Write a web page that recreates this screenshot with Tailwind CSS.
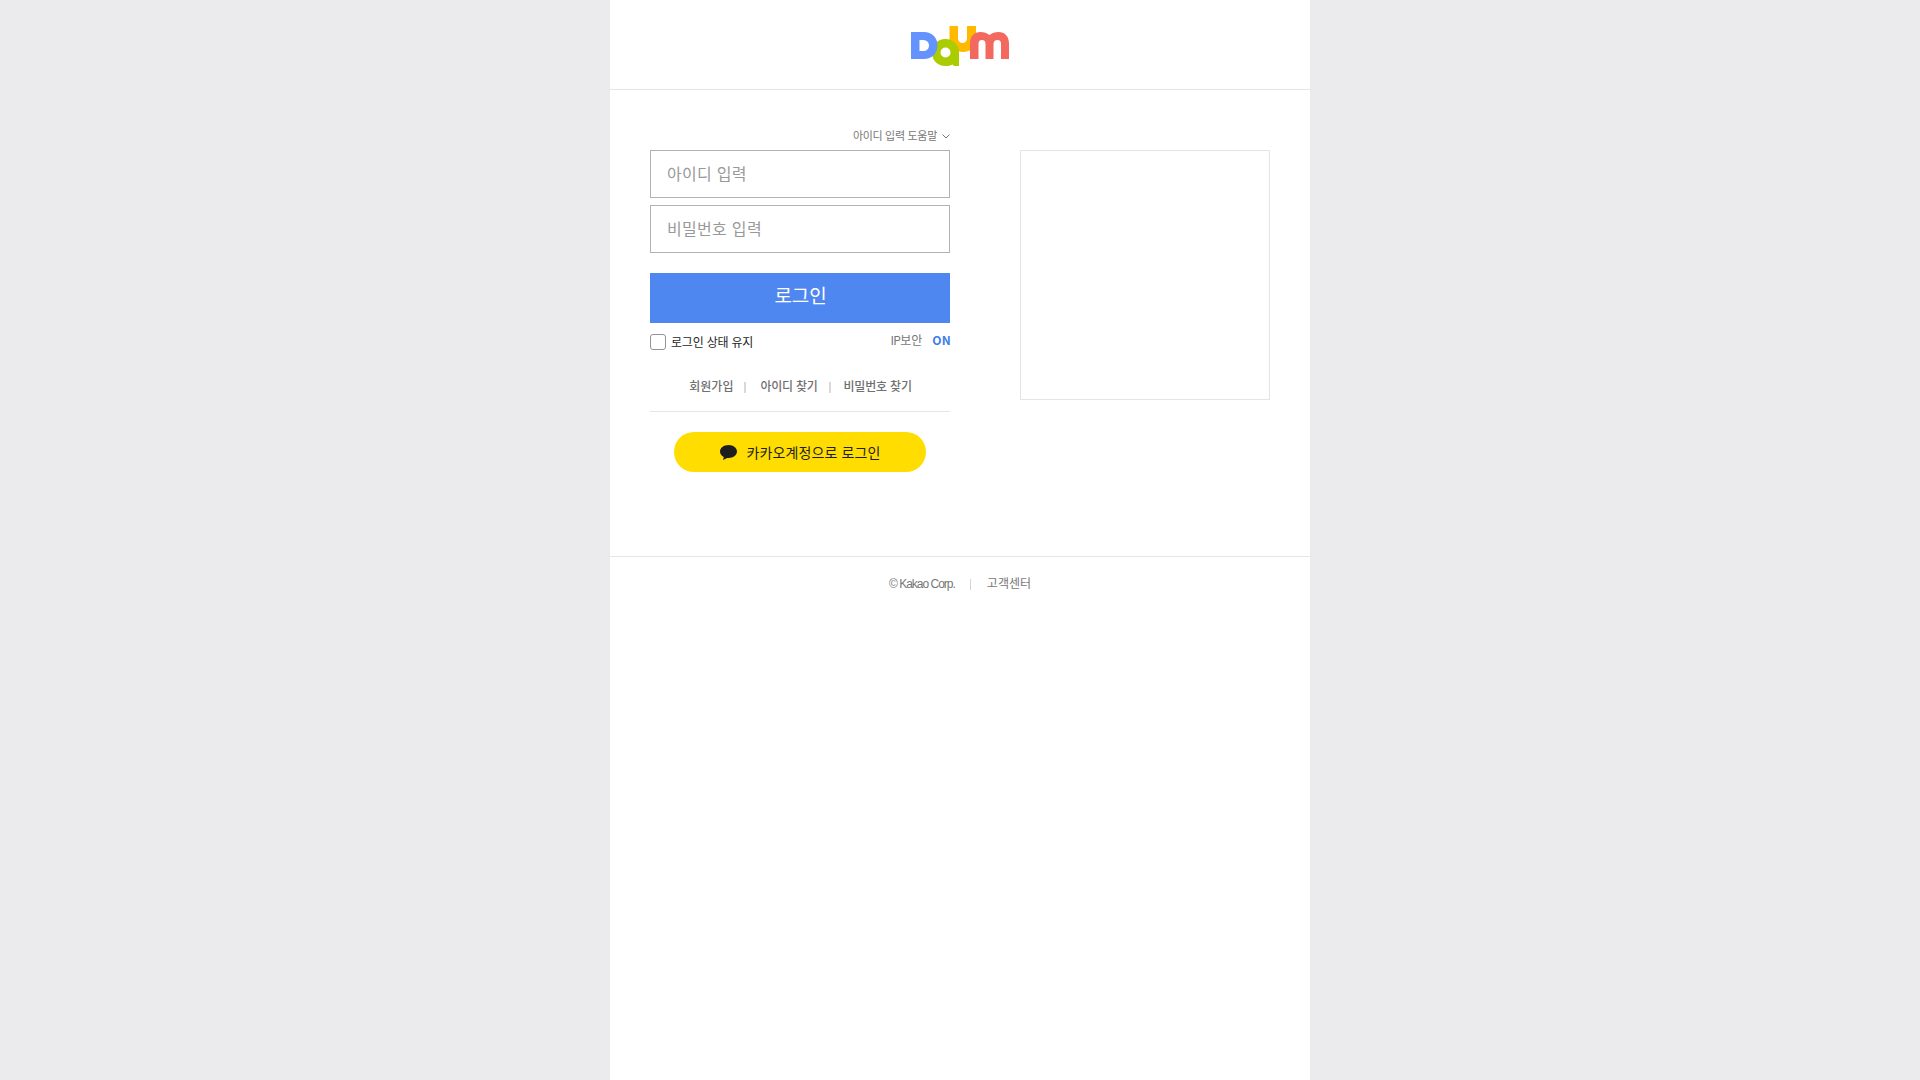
<!DOCTYPE html>
<html lang="ko">
<head>
<meta charset="utf-8">
<title>Daum 로그인</title>
<script src="https://cdn.jsdelivr.net/npm/@tailwindcss/browser@4"></script>
</head>
<body class="bg-[#ebebed] font-['Noto_Sans_CJK_KR',sans-serif] text-xs whitespace-nowrap">
<div class="mx-auto min-h-screen w-[700px] bg-white">
  <header class="flex h-[90px] justify-center border-b border-[#e5e5e5] pt-[26px]">
    <svg class="h-10 w-[98px]" viewBox="0 0 98 40" aria-label="Daum">
      <path fill="#ffb900" d="M38.500 0H47v12.500a4.500 4.500 0 0 0 9 0V0h9v14c0 7-5 12-13 12s-13.500-4-13.500-11z"/>
      <path fill="#abcc00" fill-rule="evenodd" d="M34.500 13C42 13 48 18.500 48 26v14h-5l-1.500-1.500c-2 1-4.500 1.500-7 1.500C26.500 40 21 34.500 21 26.500S26.500 13 34.500 13zm0 8.500a5 5 0 1 0 0 10 5 5 0 0 0 0-10z"/>
      <path fill="#6492ff" fill-rule="evenodd" d="M0 6h13c8 0 13.500 5.500 13.500 13.500S21 33 13 33H0zM8.500 14v11h4a5.500 5.500 0 0 0 0-11z"/>
      <path fill="#f4695f" d="M59 33V17.500C59 10.500 63 6 69.500 6c3.500 0 6.500 1 9 3 2.500-2 5.500-3 9-3C94 6 98 10.500 98 17.500V33h-8V18c0-2.500-1-4-3.500-4S82.500 15.500 82.500 18v15h-8V18c0-2.500-1-4-3.500-4S67.500 15.500 67.500 18v15z"/>
    </svg>
  </header>

  <main class="flex h-[466px] justify-between px-10">
    <section class="h-full w-[300px] pt-9">
      <div class="flex h-6 items-start justify-end text-[#777]">
        <span class="mr-[5px] text-[11px] leading-[18px] tracking-[-0.3px]">아이디 입력 도움말</span>
        <svg class="mt-2 h-[5px] w-2" viewBox="0 0 8 5" fill="none" stroke="#777"><path d="m.5.5 3.500 3.500L7.500.5"/></svg>
      </div>
      <input aria-label="아이디" placeholder="아이디 입력" class="block h-12 w-full border border-[#b2b2b2] bg-white px-4 pb-0.5 text-base tracking-[0.3px] placeholder:text-[#999]">
      <input type="password" aria-label="비밀번호" placeholder="비밀번호 입력" class="mt-[7px] block h-12 w-full border border-[#b2b2b2] bg-white px-4 pb-0.5 text-base tracking-[0.3px] placeholder:text-[#999]">
      <button class="mt-5 block h-[50px] w-full bg-[#4f87f0] pb-1.5 pl-px text-[19px] tracking-[-0.2px] text-white">로그인</button>
      <div class="mt-[11px] flex h-4 items-center">
        <span class="size-4 rounded-[3px] border border-[#949494]"></span>
        <span class="ml-[5px] text-xs tracking-[-0.2px] text-[#1e1e1e]">로그인 상태 유지</span>
        <span class="mr-2.5 mb-1 ml-auto text-xs text-[#777]"><span class="tracking-[-0.7px]">IP</span>보안</span>
        <strong class="mb-1 -mr-px text-xs font-bold tracking-[0.2px] text-[#3f7ee8]">ON</strong>
      </div>
      <div class="mt-[27px] flex h-[18px] items-center justify-center pl-px font-medium text-[#707070]">
        <a>회원가입</a><i class="mt-0.5 mr-3.5 ml-[11px] h-[11px] w-0.5 bg-[#d9d9d9]"></i><a class="tracking-[-0.25px]">아이디 찾기</a><i class="mt-0.5 mr-[13px] ml-[11px] h-[11px] w-0.5 bg-[#d9d9d9]"></i><a class="tracking-[-0.2px]">비밀번호 찾기</a>
      </div>
      <hr class="mt-4 border-[#e5e5e5]">
      <button class="mx-auto mt-5 flex h-10 w-[252px] items-center justify-center gap-2.5 rounded-full bg-[#fd0] text-sm text-[#1e1e1e]">
        <svg class="h-[15px] w-[17px]" viewBox="0 0 17 15" fill="#1e1e1e"><path d="M8.500 0C3.800 0 0 2.900 0 6.500c0 2.300 1.500 4.300 3.800 5.400L3 15l4.200-2.100 1.300.1c4.700 0 8.500-2.900 8.500-6.500S13.200 0 8.500 0z"/></svg>
        <span class="pb-px tracking-[0.1px]">카카오계정으로 로그인</span>
      </button>
    </section>
    <aside class="mt-[60px] size-[250px] border border-[#e5e5e5]"></aside>
  </main>

  <footer class="flex h-[55px] items-center justify-center border-t border-[#e5e5e5] text-xs text-[#777]">
    <span class="font-['Liberation_Sans',sans-serif] tracking-[-1px]">© Kakao Corp.</span>
    <i class="mr-4 ml-[15px] h-[11px] w-px bg-[#d5d5d5]"></i>
    <a class="pb-0.5">고객센터</a>
  </footer>
</div>
</body>
</html>
